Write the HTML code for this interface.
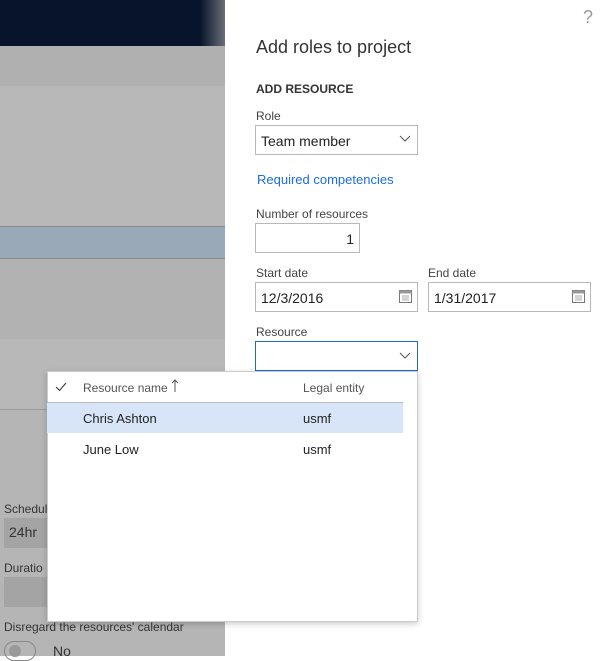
<!DOCTYPE html>
<html><head><style>
*{margin:0;padding:0;box-sizing:border-box}
body{width:615px;height:656px;overflow:hidden;position:relative;font-family:"Liberation Sans",sans-serif;background:#fff;color:#222}
.a{position:absolute}
.lbl{font-size:12px;color:#444}
.inp{border:1px solid #b8b8b8;background:#fff;height:30px;font-size:14px;padding:0 5px;line-height:30px;color:#222}
</style></head><body>
<div class="a" style="left:0;top:0;width:225px;height:656px;background:#b5b5b5"></div>
<div class="a" style="left:0;top:0;width:225px;height:46px;background:#08142b"></div>
<div class="a" style="left:200px;top:0;width:25px;height:46px;background:linear-gradient(90deg,#08142b,#6a6e78)"></div>
<div class="a" style="left:0;top:46px;width:225px;height:40px;background:#b0b0b0"></div>
<div class="a" style="left:0;top:86px;width:225px;height:140px;background:#b8b8b8"></div>
<div class="a" style="left:0;top:226px;width:225px;height:33px;background:#99a9b8;border-top:1px solid #8a8a8a;border-bottom:1px solid #8a8a8a"></div>
<div class="a" style="left:0;top:259px;width:225px;height:80px;background:#b2b2b2"></div>
<div class="a" style="left:0;top:339px;width:225px;height:70px;background:#b8b8b8"></div>
<div class="a" style="left:0;top:409px;width:225px;height:1px;background:#999"></div>
<div class="a" style="left:4px;top:502px;font-size:12px;color:#333">Schedul</div>
<div class="a" style="left:4px;top:518px;width:60px;height:30px;background:#a4a4a4;font-size:14px;padding:6px 5px;color:#333">24hr</div>
<div class="a" style="left:4px;top:561px;font-size:12px;color:#333">Duratio</div>
<div class="a" style="left:4px;top:577px;width:60px;height:30px;background:#a4a4a4"></div>
<div class="a" style="left:4px;top:620px;font-size:12px;color:#333">Disregard the resources' calendar</div>
<div class="a" style="left:4px;top:641px;width:32px;height:20px;border:1px solid #888;border-radius:10px"></div>
<div class="a" style="left:9px;top:645px;width:12px;height:12px;background:#999;border-radius:50%"></div>
<div class="a" style="left:53px;top:643px;font-size:14px;color:#333">No</div>

<div class="a" style="left:583px;top:7px;font-size:18px;color:#999">?</div>
<div class="a" style="left:256px;top:37px;font-size:18px;color:#333">Add roles to project</div>
<div class="a" style="left:256px;top:82px;font-size:12px;font-weight:bold;color:#333">ADD RESOURCE</div>
<div class="a lbl" style="left:256px;top:109px">Role</div>
<div class="a inp" style="left:255px;top:125px;width:163px">Team member</div>
<svg class="a" style="left:399px;top:135px" width="12" height="8"><path d="M1 1L6 6L11 1" stroke="#555" fill="none"/></svg>
<div class="a" style="left:257px;top:172px;font-size:13px;color:#1a6ee0">Required competencies</div>
<div class="a lbl" style="left:256px;top:207px">Number of resources</div>
<div class="a inp" style="left:255px;top:223px;width:105px;text-align:right">1</div>
<div class="a lbl" style="left:256px;top:266px">Start date</div>
<div class="a inp" style="left:255px;top:282px;width:163px">12/3/2016</div>
<div class="a lbl" style="left:428px;top:266px">End date</div>
<div class="a inp" style="left:428px;top:282px;width:163px">1/31/2017</div>
<svg class="a" style="left:399px;top:290px" width="13" height="13"><rect x="0.5" y="0.5" width="12" height="12" fill="none" stroke="#777"/><rect x="0.5" y="0.5" width="12" height="3" fill="#999"/><path d="M3 6h7M3 8h7M3 10h7" stroke="#aaa"/></svg>
<svg class="a" style="left:572px;top:290px" width="13" height="13"><rect x="0.5" y="0.5" width="12" height="12" fill="none" stroke="#777"/><rect x="0.5" y="0.5" width="12" height="3" fill="#999"/><path d="M3 6h7M3 8h7M3 10h7" stroke="#aaa"/></svg>
<div class="a lbl" style="left:256px;top:325px">Resource</div>
<div class="a inp" style="left:255px;top:341px;width:163px;border-color:#2266dd"></div>
<svg class="a" style="left:399px;top:352px" width="12" height="8"><path d="M1 1L6 6L11 1" stroke="#555" fill="none"/></svg>

<div class="a" style="left:47px;top:371px;width:371px;height:251px;background:#fff;border:1px solid #ccc;box-shadow:0 2px 6px rgba(0,0,0,.2)"></div>
<svg class="a" style="left:55px;top:382px" width="12" height="10"><path d="M1 5L4.5 8.5L11 1" stroke="#333" fill="none"/></svg>
<div class="a" style="left:83px;top:381px;font-size:12px;color:#555">Resource name</div>
<svg class="a" style="left:171px;top:379px" width="8" height="14"><path d="M4 13V1M1 4L4 1L7 4" stroke="#555" fill="none"/></svg>
<div class="a" style="left:303px;top:381px;font-size:12px;color:#555">Legal entity</div>
<div class="a" style="left:47px;top:402px;width:356px;height:1px;background:#bbb"></div>
<div class="a" style="left:47px;top:403px;width:356px;height:30px;background:#d8e4f8"></div>
<div class="a" style="left:83px;top:411px;font-size:13px;color:#222">Chris Ashton</div>
<div class="a" style="left:303px;top:411px;font-size:13px;color:#222">usmf</div>
<div class="a" style="left:83px;top:442px;font-size:13px;color:#222">June Low</div>
<div class="a" style="left:303px;top:442px;font-size:13px;color:#222">usmf</div>
</body></html>
